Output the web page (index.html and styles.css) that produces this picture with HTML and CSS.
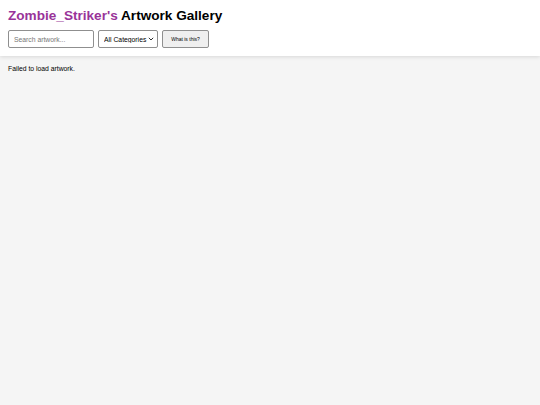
FILE: index.html
```html
<!DOCTYPE html>
<html>
<head>
<meta charset="utf-8">
<link rel="stylesheet" href="styles.css">
</head>
<body>
<header class="header">
  <h1 class="title"><span class="name">Zombie_Striker's</span> Artwork Gallery</h1>
  <div class="controls">
    <input class="search" type="text" placeholder="Search artwork...">
    <div class="select-wrap">
      <select class="category"><option>All Categories</option></select>
      <svg class="chevron" width="6" height="4" viewBox="0 0 6 4"><path d="M0.8 0.8 L3 3 L5.2 0.8" fill="none" stroke="#333" stroke-width="1"/></svg>
    </div>
    <button class="help">What is this?</button>
  </div>
</header>
<main class="content">
  <p class="message">Failed to load artwork.</p>
</main>
</body>
</html>
```
FILE: styles.css
```css
html, body { margin: 0; padding: 0; }
body {
  background: #f5f5f5;
  font-family: "Liberation Sans", Arial, sans-serif;
  color: #000;
  min-height: 405px;
}
.header {
  background: #fff;
  padding: 8px 8px 8px;
  box-shadow: 0 1px 4px rgba(0,0,0,0.12);
}
.title {
  margin: 0 0 6px;
  font-size: 13.6px;
  font-weight: bold;
  line-height: 16px;
}
.name { color: #993399; }
.controls {
  display: flex;
  gap: 4px;
  align-items: center;
}
.search {
  box-sizing: border-box;
  width: 86px;
  height: 18px;
  font-size: 6.8px;
  padding: 2px 5px;
  border: 1px solid #8f8f8f;
  border-radius: 2px;
  font-family: "Liberation Sans", Arial, sans-serif;
}
.search::placeholder { color: #777; }
.select-wrap {
  position: relative;
  width: 60px;
  height: 18px;
}
.category {
  display: block;
  appearance: none;
  -webkit-appearance: none;
  box-sizing: border-box;
  width: 60px;
  height: 18px;
  margin: 0;
  font-size: 6.8px;
  padding: 0 0 0 5px;
  border: 1px solid #8f8f8f;
  border-radius: 2px;
  font-family: "Liberation Sans", Arial, sans-serif;
  background: #fff;
  color: #000;
}
.chevron {
  position: absolute;
  right: 4px;
  top: 7px;
  pointer-events: none;
}
.help {
  box-sizing: border-box;
  width: 47px;
  height: 18px;
  font-size: 5px;
  padding: 0;
  border: 1px solid #8f8f8f;
  border-radius: 2px;
  background: #efefef;
  color: #000;
  font-family: "Liberation Sans", Arial, sans-serif;
}
.content { padding: 8px 8px; }
.message { margin: 1px 0 0; font-size: 6.8px; }
```
